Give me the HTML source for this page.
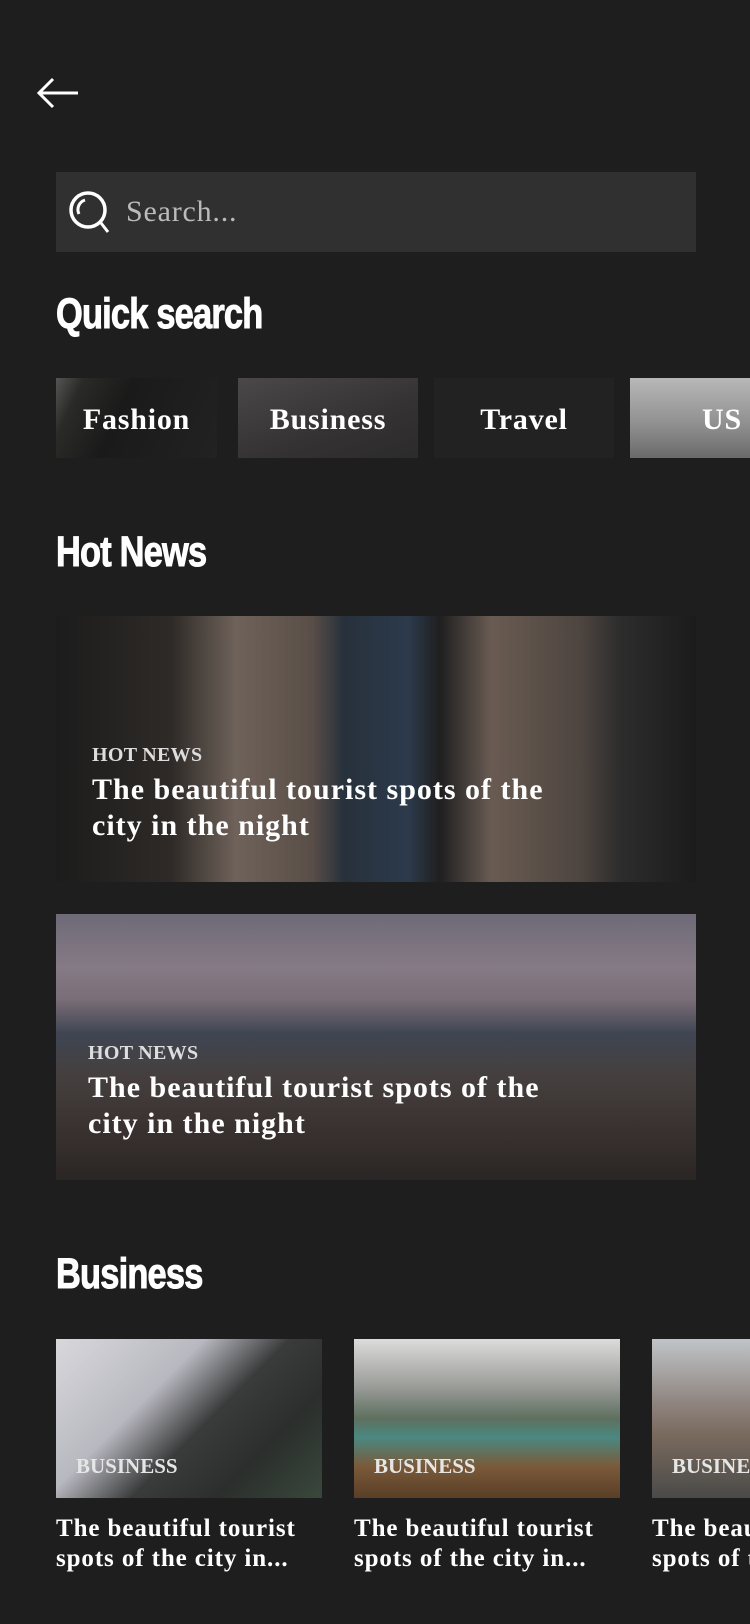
<!DOCTYPE html>
<html><head><meta charset="utf-8"><style>
*{margin:0;padding:0;box-sizing:border-box}
html{overflow:hidden;width:750px}
body{width:750px;height:1624px;background:#1e1e1e;overflow:hidden;position:relative;font-family:"Liberation Serif",serif;color:#fff}
.abs{position:absolute}
.h{font-family:"Liberation Sans",sans-serif;font-weight:bold;font-size:43px;transform:scaleX(.8);transform-origin:left top;letter-spacing:-1px;-webkit-text-stroke:1px #fff}
.chip{position:absolute;top:378px;height:80px;display:flex;align-items:center;justify-content:center;font-weight:bold;font-size:30px;letter-spacing:.8px;padding-top:3px}
.card{position:absolute;left:56px;width:640px;height:266px;overflow:hidden}
.lab{position:absolute;font-weight:bold;font-size:20px;color:#ddd;letter-spacing:.3px}
.tt{position:absolute;font-weight:bold;font-size:30px;line-height:36px;color:#fff;letter-spacing:1px;white-space:nowrap}
.bc{position:absolute;top:1339px;width:266px;height:159px;overflow:hidden}
.bl{position:absolute;left:20px;top:115px;font-weight:bold;font-size:21px;color:#e6e6e6}
.bt{position:absolute;top:1514px;font-weight:bold;font-size:25px;line-height:30px;white-space:nowrap;letter-spacing:.9px}
</style></head><body>
<svg class="abs" style="left:36px;top:76px" width="44" height="34" viewBox="0 0 44 34"><path d="M42 17H3M17 3L3 17l14 14" stroke="#fff" stroke-width="3" fill="none"/></svg>
<div class="abs" style="left:56px;top:172px;width:640px;height:80px;background:#303030"></div>
<svg class="abs" style="left:68px;top:190px" width="50" height="48" viewBox="0 0 50 48"><circle cx="20" cy="20" r="17" stroke="#fff" stroke-width="3.5" fill="none"/><path d="M11 24a10 10 0 0 1 6-14" stroke="#fff" stroke-width="3" fill="none"/><path d="M33 33l7 9" stroke="#fff" stroke-width="3" /></svg>
<div class="abs" style="left:126px;top:195px;font-size:30px;color:#bbb;letter-spacing:.8px">Search...</div>
<div class="abs h" style="left:56px;top:290px">Quick search</div>
<div class="chip" style="left:56px;width:161px;background:linear-gradient(115deg,#555 0%,#2a2a28 14%,#1a1a1a 40%,#222 100%)">Fashion</div>
<div class="chip" style="left:238px;width:180px;background:linear-gradient(160deg,#4a4848,#343232 60%,#2c2b2b)">Business</div>
<div class="chip" style="left:434px;width:180px;background:#232222">Travel</div>
<div class="chip" style="left:630px;width:130px;background:linear-gradient(180deg,#b8b8b8,#8e8e8e 60%,#6a6a6a);justify-content:flex-start;padding-left:72px">US</div>
<div class="abs h" style="left:56px;top:528px">Hot News</div>
<div class="card" style="top:616px;background:linear-gradient(90deg,#1c1c1c 0%,#2e2a27 18%,#6e625a 28%,#5a4e48 40%,#27313b 45%,#2c3a4c 55%,#1f1f1f 60%,#695b52 68%,#4e4540 82%,#2d2d2d 88%,#1b1b1b 100%)">
<div class="lab" style="left:36px;top:128px">HOT NEWS</div>
<div class="tt" style="left:36px;top:156px">The beautiful tourist spots of the<br>city in the night</div></div>
<div class="card" style="top:914px;background:linear-gradient(180deg,#6e6a78 0%,#857a85 20%,#7a6e78 32%,#3f4552 45%,#45403f 60%,#3a3230 80%,#2a2625 100%)">
<div class="lab" style="left:32px;top:128px">HOT NEWS</div>
<div class="tt" style="left:32px;top:156px">The beautiful tourist spots of the<br>city in the night</div></div>
<div class="abs h" style="left:56px;top:1250px">Business</div>
<div class="bc" style="left:56px;background:linear-gradient(135deg,#d8d8dc 0%,#b8b8c0 35%,#3a3c3c 55%,#2b2e2c 75%,#39483c 100%)"><div class="bl">BUSINESS</div></div>
<div class="bc" style="left:354px;background:linear-gradient(180deg,#dcdcdc 0%,#9a9c98 30%,#5e7060 50%,#4a8880 62%,#7a5a3a 80%,#5a3e26 100%)"><div class="bl">BUSINESS</div></div>
<div class="bc" style="left:652px;width:98px;background:linear-gradient(180deg,#c0c4c8 0%,#8f8580 40%,#7a6a5e 60%,#4a4a48 100%)"><div class="bl">BUSINESS</div></div>
<div class="bt" style="left:56px">The beautiful tourist<br>spots of the city in...</div>
<div class="bt" style="left:354px">The beautiful tourist<br>spots of the city in...</div>
<div class="bt" style="left:652px;width:98px;overflow:hidden">The beautiful tourist<br>spots of the city in...</div>
</body></html>
